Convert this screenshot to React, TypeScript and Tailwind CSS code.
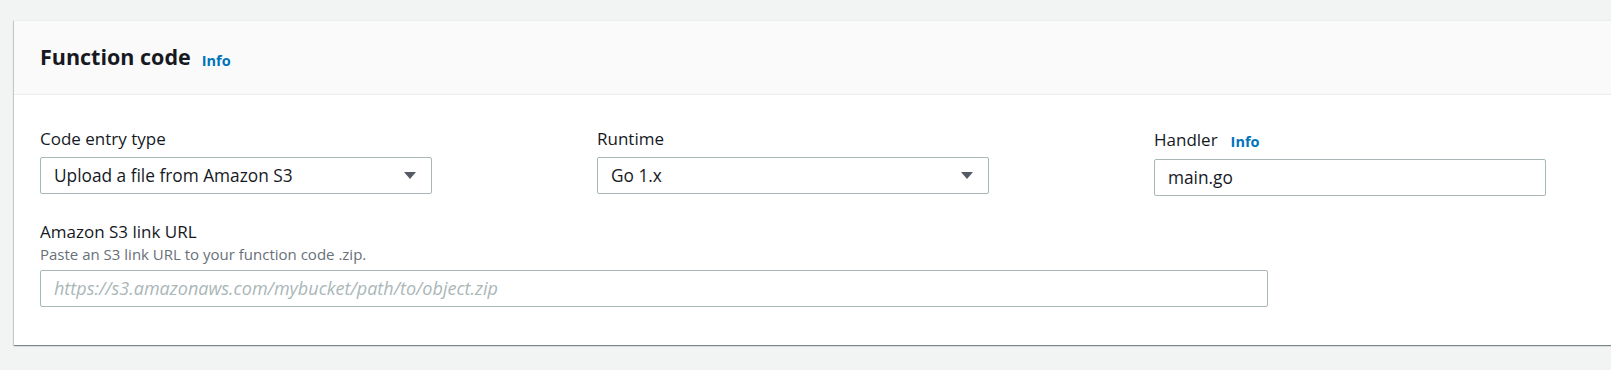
function Caret() {
  return (
    <svg width="12" height="7" viewBox="0 0 12 7" aria-hidden="true">
      <path d="M0 0 L12 0 L6 7 Z" fill="#545b64" />
    </svg>
  )
}

function InfoLink() {
  return <span className="text-[14.5px] font-bold text-[#0073bb] leading-none">Info</span>
}

function SelectBox({ value }: { value: string }) {
  return (
    <div className="flex h-[37px] w-[392px] items-center justify-between rounded-[2px] border border-[#aab7b8] bg-white pl-[13px] pr-[15px] text-[17.3px] text-[#16191f]">
      <span>{value}</span>
      <Caret />
    </div>
  )
}

export default function App() {
  return (
    <div
      className="h-[370px] w-full overflow-hidden bg-[#f2f3f3] pt-[20px] pl-[14px]"
      style={{ fontFamily: '"Open Sans", "Noto Sans", Arial, sans-serif' }}
    >
      <div className="mr-[-10px] h-[325px] border-t border-[#eaeded] bg-white shadow-[0_1px_1px_0_rgba(0,28,36,0.3),1px_1px_1px_0_rgba(0,28,36,0.15),-1px_1px_1px_0_rgba(0,28,36,0.15)]">
        {/* Header */}
        <div className="flex h-[74px] items-center gap-[11px] border-b border-[#eaeded] bg-[#fafafa] pl-[26px]">
          <h2 className="text-[21.5px] font-bold text-[#16191f]">Function code</h2>
          <span className="pt-[4px]">
            <InfoLink />
          </span>
        </div>

        {/* Body */}
        <div className="pl-[26px] pt-[32px]">
          <div className="flex gap-[165px]">
            <div className="flex flex-col">
              <label className="mb-[6px] text-[17px] leading-[24px] text-[#16191f]">Code entry type</label>
              <SelectBox value="Upload a file from Amazon S3" />
            </div>
            <div className="flex flex-col">
              <label className="mb-[6px] text-[17px] leading-[24px] text-[#16191f]">Runtime</label>
              <SelectBox value="Go 1.x" />
            </div>
            <div className="flex flex-col">
              <div className="mb-[6px] flex items-center gap-[13px] text-[17px] leading-[24px] text-[#16191f]">
                <label>Handler</label>
                <span className="pt-[2px]">
                  <InfoLink />
                </span>
              </div>
              <div className="flex h-[37px] w-[392px] items-center rounded-[2px] border border-[#aab7b8] bg-white pl-[13px] text-[17.3px] text-[#16191f]">
                main.go
              </div>
            </div>
          </div>

          <div className="mt-[24px] flex flex-col">
            <label className="text-[17px] leading-[24px] text-[#16191f]">Amazon S3 link URL</label>
            <span className="text-[15px] leading-[20px] text-[#687078]">
              Paste an S3 link URL to your function code .zip.
            </span>
            <div className="mt-[6px] flex h-[37px] w-[1228px] items-center rounded-[2px] border border-[#aab7b8] bg-white pl-[13px] text-[18px] italic text-[#aab7b8]">
              https://s3.amazonaws.com/mybucket/path/to/object.zip
            </div>
          </div>
        </div>
      </div>
    </div>
  )
}
